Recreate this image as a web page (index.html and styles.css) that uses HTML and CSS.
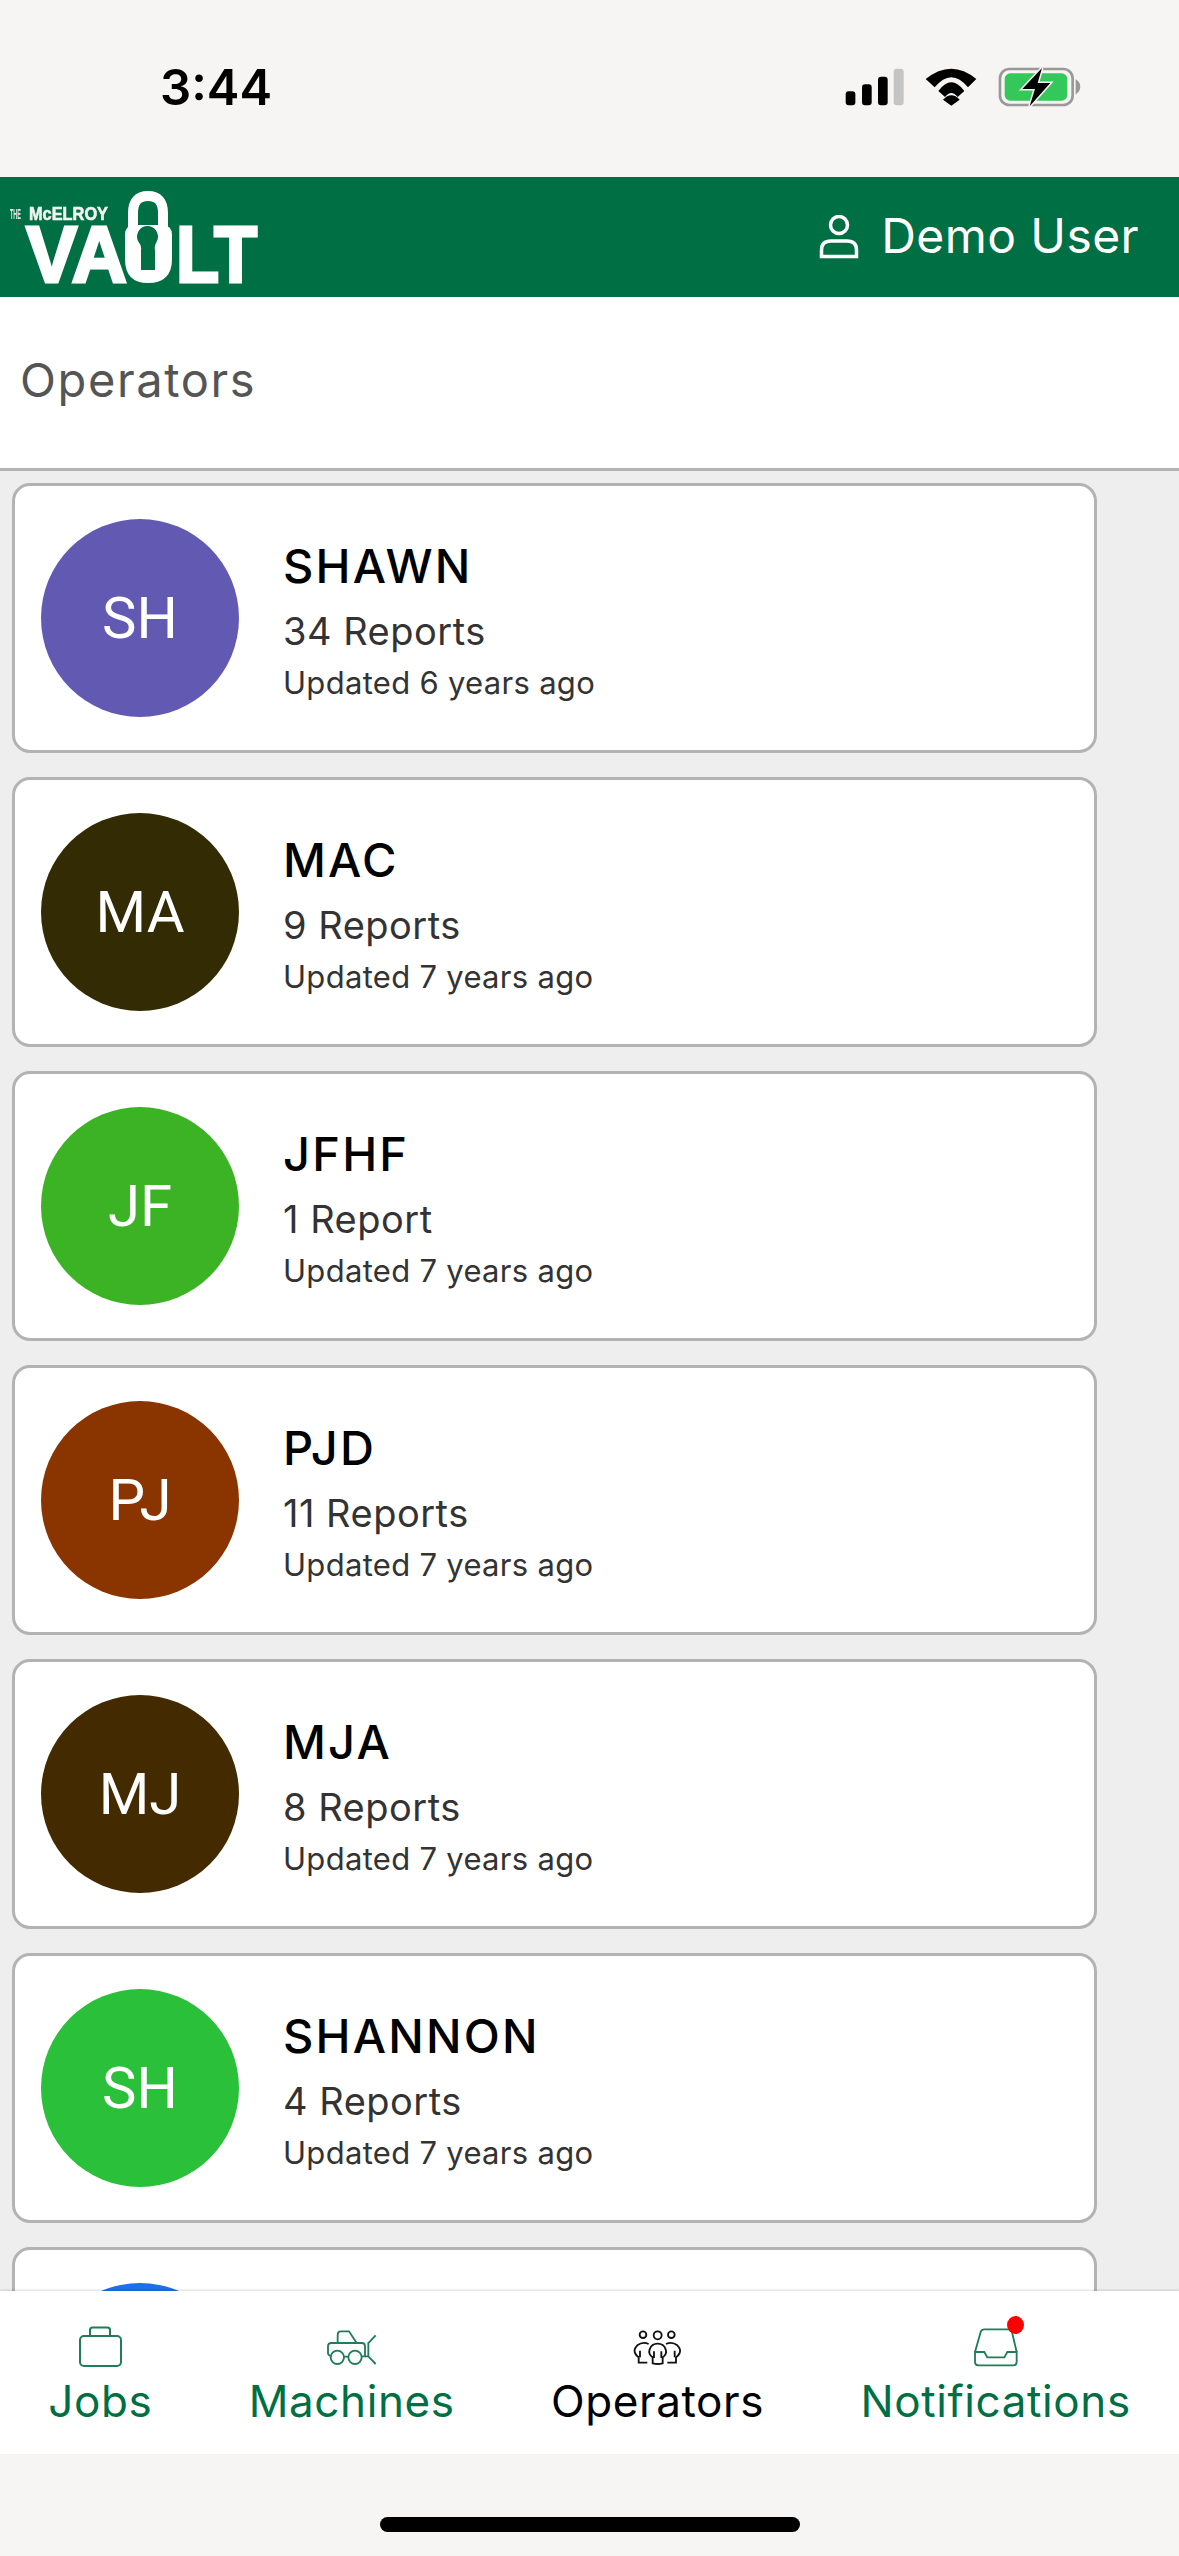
FILE: index.html
```html
<!DOCTYPE html>
<html lang="en">
<head>
  <meta charset="UTF-8">
  <meta name="viewport" content="width=device-width, initial-scale=1.0">
  <title>Operators</title>
  <link rel="stylesheet" href="styles.css">
</head>
<body>

  <div class="status-bar">
    <span class="status-time">3:44</span>
    <svg class="status-icons" viewBox="130 40 720 140">
      <rect x="138" y="125" width="29" height="42" rx="9" fill="#000"/>
      <rect x="187" y="104" width="29" height="63" rx="9" fill="#000"/>
      <rect x="235" y="81" width="29" height="86" rx="9" fill="#000"/>
      <rect x="282" y="57" width="30" height="110" rx="9" fill="#c4c4c4"/>
      <path d="M378 88Q455 26 530 88L505 113Q455 52 405 113Z" fill="#000"/>
      <path d="M416 124Q455 72 494 124L474 142Q455 118 436 142Z" fill="#000"/>
      <path d="M430 150Q455 124 480 150L455 168Z" fill="#000"/>
      <rect x="601" y="58" width="218" height="108" rx="28" fill="none" stroke="#999" stroke-width="8"/>
      <rect x="615" y="71" width="188" height="82" rx="17" fill="#34c759"/>
      <path d="M828 88Q842 98 842 111Q842 124 828 135Z" fill="#999"/>
      <path d="M727 55L668 118H706L690 170L752 100H714Z" fill="#000" stroke="#f6f5f3" stroke-width="9" paint-order="stroke"/>
    </svg>
  </div>

  <header class="top-bar">
    <svg class="logo" viewBox="0 0 264 120">
      <path class="logo-shackle" d="M133 53V36Q133 19 148 19Q163 19 163 36V53"/>
      <text class="logo-tiny" x="10" y="42" textLength="11" lengthAdjust="spacingAndGlyphs">THE</text>
      <text class="logo-small" x="29" y="43" textLength="79" lengthAdjust="spacingAndGlyphs">McELROY</text>
      <text class="logo-big" x="26" y="105" textLength="101" lengthAdjust="spacingAndGlyphs">VA</text>
      <text class="logo-big" x="176" y="105" textLength="81" lengthAdjust="spacingAndGlyphs">LT</text>
      <path class="logo-body" fill-rule="evenodd" d="M125 58Q125 48 135 48H162Q172 48 172 58V82Q172 106 148 106Q125 106 125 82ZM138 64A10.500 10.500 0 1 1 157 64Q154 69 155 73V93H141V73Q142 69 138 64Z"/>
    </svg>
    <div class="user">
      <svg class="user-icon" viewBox="0 0 40 44">
        <circle cx="20" cy="10" r="8.500"/>
        <path d="M2.500 41.500V35Q2.500 26 12 26H28Q37.500 26 37.500 35V41.500Z"/>
      </svg>
      <span>Demo User</span>
    </div>
  </header>

  <div class="page-title">Operators</div>

  <main class="operator-list">
    <div class="card">
      <div class="avatar purple">SH</div>
      <div class="card-text">
        <div class="card-name">SHAWN</div>
        <div class="card-reports">34 Reports</div>
        <div class="card-updated">Updated 6 years ago</div>
      </div>
    </div>
    <div class="card">
      <div class="avatar olive">MA</div>
      <div class="card-text">
        <div class="card-name">MAC</div>
        <div class="card-reports">9 Reports</div>
        <div class="card-updated">Updated 7 years ago</div>
      </div>
    </div>
    <div class="card">
      <div class="avatar leaf">JF</div>
      <div class="card-text">
        <div class="card-name">JFHF</div>
        <div class="card-reports">1 Report</div>
        <div class="card-updated">Updated 7 years ago</div>
      </div>
    </div>
    <div class="card">
      <div class="avatar rust">PJ</div>
      <div class="card-text">
        <div class="card-name">PJD</div>
        <div class="card-reports">11 Reports</div>
        <div class="card-updated">Updated 7 years ago</div>
      </div>
    </div>
    <div class="card">
      <div class="avatar brown">MJ</div>
      <div class="card-text">
        <div class="card-name">MJA</div>
        <div class="card-reports">8 Reports</div>
        <div class="card-updated">Updated 7 years ago</div>
      </div>
    </div>
    <div class="card">
      <div class="avatar green">SH</div>
      <div class="card-text">
        <div class="card-name">SHANNON</div>
        <div class="card-reports">4 Reports</div>
        <div class="card-updated">Updated 7 years ago</div>
      </div>
    </div>
    <div class="card">
      <div class="avatar blue"></div>
    </div>
  </main>

  <nav class="tab-bar">
    <div class="tab">
      <svg class="tab-icon" width="44" height="42" viewBox="0 0 44 42">
        <rect x="2" y="10" width="41" height="30" rx="4"/>
        <path d="M12 10V4Q12 1.500 14.500 1.500H29.500Q32 1.500 32 4V10"/>
      </svg>
      <span class="tab-label">Jobs</span>
    </div>
    <div class="tab">
      <svg class="tab-icon tab-icon-scaled" width="55" height="42" viewBox="70 24 165 126">
        <path d="M111 75V50Q111 40 121 40H145L168 75"/>
        <path d="M92 115Q82 112 82 105V85Q82 75 92 75H183Q193 75 193 85V115H183"/>
        <circle cx="110" cy="118" r="20"/>
        <circle cx="163" cy="118" r="20"/>
        <path d="M130 116H143M203 115V75L225 52M193 115H203L225 138"/>
      </svg>
      <span class="tab-label">Machines</span>
    </div>
    <div class="tab tab-active">
      <svg class="tab-icon tab-icon-scaled" width="55" height="42" viewBox="58 24 165 126">
        <circle cx="97" cy="50" r="10"/>
        <circle cx="141" cy="52" r="12"/>
        <circle cx="182" cy="50" r="10"/>
        <path d="M114 78Q96 70 80 82Q68 94 73 105Q76 112 84 118V134H110"/>
        <path d="M166 78Q184 70 200 82Q212 94 207 105Q204 112 196 118V134H170"/>
        <path d="M126 136V118Q112 108 117 94Q123 77 141 77Q159 77 165 94Q170 108 156 118V136Q141 140 126 136Z"/>
        <path d="M88 98V118M192 98V118M130 100V120M152 100V120"/>
      </svg>
      <span class="tab-label">Operators</span>
    </div>
    <div class="tab">
      <div class="tab-icon-wrap">
        <svg class="tab-icon tab-icon-scaled" width="48" height="42" viewBox="66 54 144 126">
          <path d="M75 132L92 72Q95 64 103 64H175Q183 64 186 72L200 132"/>
          <path d="M75 132H103L112 148H163L172 132H200V162Q200 172 190 172H85Q75 172 75 162Z"/>
        </svg>
        <span class="badge"></span>
      </div>
      <span class="tab-label">Notifications</span>
    </div>
  </nav>

  <div class="home-area">
    <div class="home-bar"></div>
  </div>

</body>
</html>
```

FILE: styles.css
```css
* {
  box-sizing: border-box;
}

body {
  margin: 0;
  width: 1179px;
  height: 2556px;
  display: flex;
  flex-direction: column;
  overflow: hidden;
  font-family: Inter, "Open Sans", sans-serif;
  background-color: #f6f5f3;
}

.status-bar {
  height: 177px;
  flex: none;
  display: flex;
  justify-content: space-between;
  align-items: flex-start;
  padding: 62px 0 0 160px;
  background-color: #f6f5f3;
}

.status-time {
  font-size: 49px;
  line-height: 52px;
  font-weight: 600;
  color: #000;
}

.status-icons {
  width: 240px;
  height: 46.67px;
  margin: 1px 96px 0 0;
}

.top-bar {
  height: 120px;
  flex: none;
  display: flex;
  justify-content: space-between;
  align-items: center;
  padding-right: 40px;
  background-color: #006f43;
  color: white;
}

.logo {
  width: 264px;
  height: 120px;
  overflow: visible;
  filter: blur(0.6px);
}

.logo-shackle {
  fill: none;
  stroke: white;
  stroke-width: 10;
}

.logo-tiny {
  font-family: "Liberation Sans", sans-serif;
  font-weight: bold;
  font-size: 14px;
  fill: #dfe9e3;
}

.logo-small {
  font-family: "Liberation Sans", sans-serif;
  font-weight: bold;
  font-size: 18px;
  fill: #f1f5f2;
  stroke: #f1f5f2;
  stroke-width: 0.6;
}

.logo-big {
  font-family: "Liberation Sans", sans-serif;
  font-weight: bold;
  font-size: 80px;
  fill: white;
  stroke: white;
  stroke-width: 3;
}

.logo-body {
  fill: white;
}

.user {
  display: flex;
  align-items: center;
  gap: 22px;
  padding-bottom: 4px;
  font-size: 48px;
  font-weight: 400;
  letter-spacing: 0.4px;
}

.user-icon {
  width: 40px;
  height: 44px;
  margin-top: 4px;
  fill: none;
  stroke: white;
  stroke-width: 3.500;
}

.page-title {
  height: 174px;
  flex: none;
  padding: 0 20px 6px;
  display: flex;
  align-items: center;
  font-size: 47px;
  font-weight: 400;
  letter-spacing: 1.6px;
  color: #555;
  background-color: white;
  border-bottom: 3px solid #b3b3b3;
}

.operator-list {
  flex: 1;
  min-height: 0;
  overflow: hidden;
  display: flex;
  flex-direction: column;
  gap: 24px;
  padding: 12px 0 0 12px;
  background-color: #eee;
}

.card {
  width: 1085px;
  height: 270px;
  flex: none;
  display: flex;
  align-items: center;
  gap: 44px;
  padding-left: 26px;
  background-color: white;
  border: 3px solid #b3b3b3;
  border-radius: 18px;
}

.avatar {
  width: 198px;
  height: 198px;
  flex: none;
  display: flex;
  align-items: center;
  justify-content: center;
  border-radius: 50%;
  font-family: Roboto, sans-serif;
  font-size: 58px;
  font-weight: 400;
  color: white;
}

.purple { background-color: #6259b2; }
.olive { background-color: #332b04; }
.leaf { background-color: #3bb325; }
.rust { background-color: #8a3400; }
.brown { background-color: #432a00; }
.green { background-color: #2bc03a; }
.blue { background-color: #1f6fe8; }

.card-text {
  display: flex;
  flex-direction: column;
  padding-bottom: 1px;
}

.card-name {
  font-size: 47px;
  line-height: 60px;
  font-weight: 500;
  letter-spacing: 2.2px;
  color: #000;
}

.card-reports {
  font-size: 38px;
  line-height: 70px;
  font-weight: 400;
  letter-spacing: 0.5px;
  color: #333;
}

.card-updated {
  font-size: 31px;
  line-height: 34px;
  font-weight: 400;
  letter-spacing: 0.3px;
  color: #333;
}

.tab-bar {
  height: 163px;
  flex: none;
  display: flex;
  justify-content: space-around;
  background-color: white;
  box-shadow: 0 -1px 2px rgba(0, 0, 0, 0.15);
  position: relative;
}

.tab {
  display: flex;
  flex-direction: column;
  align-items: center;
  padding-top: 35px;
}

.tab-icon {
  display: block;
  fill: none;
  stroke: #1f7d57;
  stroke-width: 2;
}

.tab-icon-scaled {
  stroke-width: 5.500;
}

.tab-icon-wrap {
  position: relative;
}

.tab-label {
  font-size: 44px;
  line-height: 66px;
  font-weight: 400;
  letter-spacing: 0.6px;
  color: #006f43;
}

.tab-active .tab-icon {
  stroke: #111;
}

.tab-active .tab-label {
  color: #000;
}

.badge {
  position: absolute;
  top: -10px;
  right: -4px;
  width: 17px;
  height: 18px;
  border-radius: 50%;
  background-color: #f00;
}

.home-area {
  height: 102px;
  flex: none;
  display: flex;
  justify-content: center;
  padding-top: 63px;
}

.home-bar {
  width: 420px;
  height: 15px;
  border-radius: 8px;
  background-color: #000;
}
```
